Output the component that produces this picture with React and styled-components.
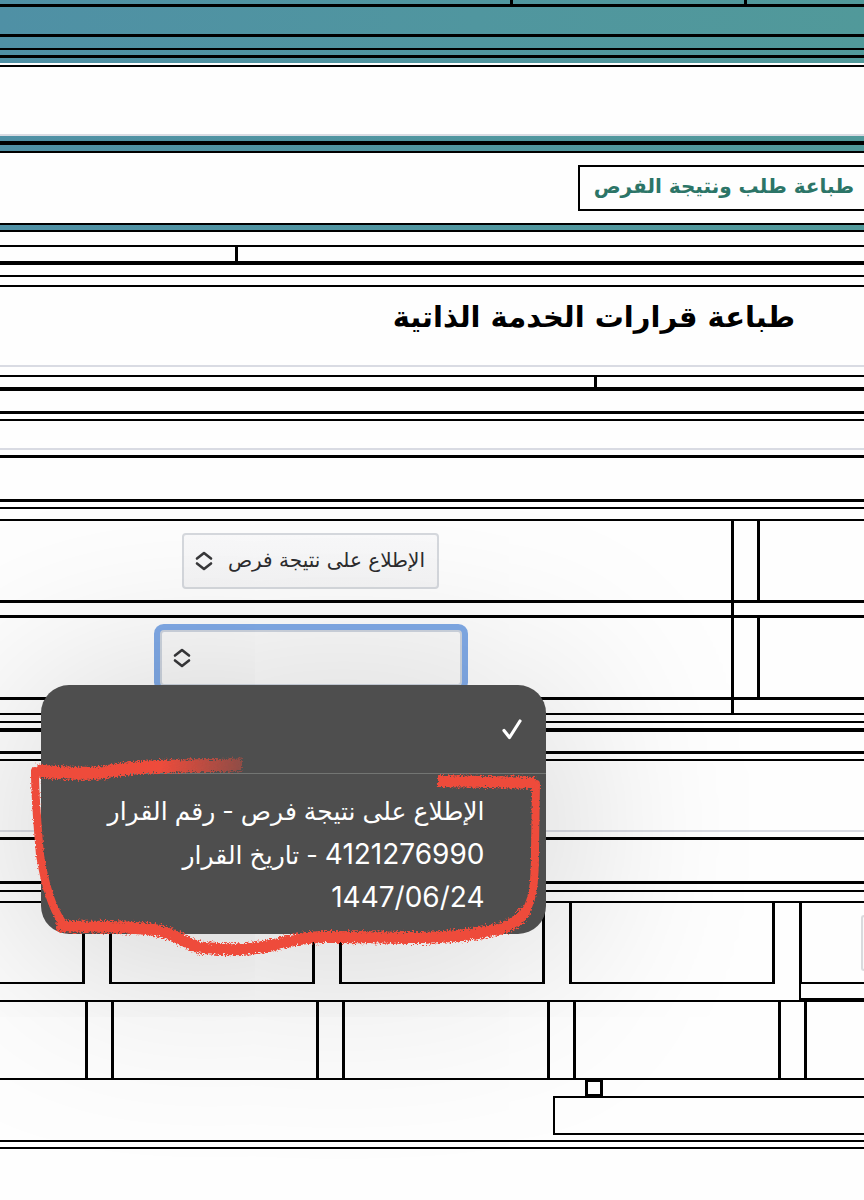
import React from "react";
import styled, { createGlobalStyle, css } from "styled-components";

const Global = createGlobalStyle`
  *, *::before, *::after { box-sizing: border-box; }
  body { margin: 0; background: #fefefe; overflow-x: hidden; }
`;

const arabic = `"DejaVu Sans", sans-serif`;

const Page = styled.main`
  min-height: 100vh;
  overflow: hidden;
  font-family: ${arabic};
`;

/* A full-width strip of the page, closed by a rule along its bottom edge. */
const Band = styled.div`
  display: flex;
  box-sizing: content-box;
  height: ${(p) => p.$h}px;
  background: ${(p) => (p.$teal ? "linear-gradient(90deg, #4f90a5, #50969f 55%, #51999a)" : "#fefefe")};
  border-bottom: ${(p) => p.$line || 0}px solid ${(p) => (p.$soft ? "#d9dbe3" : "#000")};
`;

const Split = styled.div`
  flex: ${(p) => p.$grow} 1 0;
  border-right: ${(p) => (p.$last ? 0 : 3)}px solid #000;
`;

const Nav = styled(Band).attrs({ as: "nav" })`
  justify-content: flex-end;
  align-items: center;
`;

const NavLink = styled.a`
  display: flex;
  align-items: center;
  height: 46px;
  padding: 0 10px 4px 14px;
  border: 2px solid #000;
  border-right: 0;
  color: #2c7567;
  font-size: 20px;
  font-weight: 700;
  text-decoration: none;
  white-space: nowrap;
`;

const TitleBand = styled(Band)`
  justify-content: flex-end;
  padding: 8px 69px 0 0;
`;

const Title = styled.h1`
  margin: 0;
  font-size: 29px;
  line-height: 44px;
  font-weight: 700;
  white-space: nowrap;
`;

const FieldCell = styled.div`
  flex: 1;
  display: flex;
  justify-content: center;
  align-items: center;
  padding-right: 110px;
  border-right: 3px solid #000;
`;

const LabelCell = styled.div`
  width: 107px;
  margin-left: 23px;
  border-left: ${(p) => (p.$open ? 0 : 3)}px solid #000;
`;

const FieldWrap = styled.div`
  position: relative;
  width: ${(p) => p.$w}px;
  height: 56px;
`;

const Select = styled.select`
  appearance: none;
  display: block;
  width: 100%;
  height: 100%;
  margin: 0;
  padding: 0 12px 2px 38px;
  border: 2px solid #d6d9de;
  border-radius: 4px;
  background: linear-gradient(#fafafb, #f5f5f6);
  color: #2c2c2e;
  font-family: ${arabic};
  font-size: 20px;
  outline: none;
  ${(p) =>
    p.$focused &&
    css`
      border-color: #cfd6e0;
      background: #fbfbfb;
      box-shadow: 0 0 0 6px #81abe8;
    `}
`;

const Chevrons = styled.svg`
  position: absolute;
  left: 12px;
  top: 18px;
  width: 20px;
  height: 20px;
  fill: none;
  stroke: #38383a;
  stroke-width: 2.6;
  stroke-linecap: round;
  stroke-linejoin: round;
  pointer-events: none;
`;

const Menu = styled.div`
  position: absolute;
  z-index: 2;
  left: -119px;
  top: 55px;
  width: 505px;
  height: 249px;
  border-radius: 28px;
  background: #4e4e4e;
  box-shadow: 0 16px 200px 16px rgba(0, 0, 0, 0.18);
`;

const Option = styled.button`
  display: block;
  width: 100%;
  height: ${(p) => p.$h}px;
  margin: 0;
  padding: ${(p) => p.$pad};
  border: 0;
  border-bottom: ${(p) => (p.$rule ? 1 : 0)}px solid #737573;
  background: none;
  color: #fff;
  font-family: Inter, ${arabic};
  font-size: 25px;
  text-align: right;
  white-space: nowrap;
`;

const Line = styled.span`
  display: block;
  height: 43px;
  line-height: 43px;
`;

const Digits = styled.span`
  font-size: 28px;
`;

const Check = styled.svg`
  display: block;
  margin-left: auto;
  width: 24px;
  height: 24px;
  fill: none;
  stroke: #fff;
  stroke-width: 3.2;
  stroke-linecap: round;
  stroke-linejoin: round;
`;

const Marker = styled.svg`
  position: absolute;
  left: -21px;
  top: 65px;
  width: 540px;
  height: 220px;
  fill: none;
  stroke: #ee4b3b;
  stroke-linecap: round;
  stroke-linejoin: round;
  pointer-events: none;
`;

const Cells = styled.div`
  display: grid;
  grid-template-columns: ${(p) => p.$cols};
  column-gap: ${(p) => p.$gap}px;
  height: ${(p) => p.$h}px;
  box-sizing: content-box;
  border-bottom: ${(p) => p.$line || 0}px solid #000;
`;

const Cell = styled.div`
  display: flex;
  justify-content: flex-end;
  align-items: center;
  border: 0 solid #000;
  border-left-width: ${(p) => (p.$first ? 0 : 3)}px;
  border-right-width: ${(p) => (p.$last ? 0 : 3)}px;
  border-bottom-width: ${(p) => (p.$closed ? 2 : 0)}px;
`;

const EdgeButton = styled.button`
  width: 3px;
  height: 56px;
  padding: 0;
  border: 2px solid #d9dadd;
  border-right: 0;
  border-radius: 4px 0 0 4px;
  background: #fafafa;
`;

const SubCell = styled.div`
  width: 65px;
  margin-left: auto;
  border-left: 2px solid #000;
  border-bottom: 2px solid #000;
`;

const Footer = styled.footer`
  display: flex;
  flex-direction: column;
  height: 55px;
  padding-left: 64%;
`;

const Handle = styled.div`
  width: 18px;
  height: 16px;
  margin-left: 32px;
  border: 3px solid #000;
  border-width: 2px 3px;
`;

const FooterBox = styled.div`
  height: 39px;
  border: 2px solid #000;
  border-right: 0;
`;

const ChevronIcon = () => (
  <Chevrons viewBox="0 0 20 20" aria-hidden="true">
    <path d="M3 7.500 10 2l7 5.500M3 12.500 10 18l7-5.500" />
  </Chevrons>
);

const MarkerDrawing = () => (
  <Marker viewBox="20 750 540 220" aria-hidden="true">
    <defs>
      <filter id="crayon" x="-5%" y="-20%" width="110%" height="140%">
        <feTurbulence type="fractalNoise" baseFrequency="0.6" numOctaves="2" seed="4" />
        <feDisplacementMap in="SourceGraphic" scale="8" xChannelSelector="R" yChannelSelector="G" />
      </filter>
      <filter id="crayonThin" x="-5%" y="-20%" width="110%" height="140%">
        <feTurbulence type="fractalNoise" baseFrequency="0.6" numOctaves="2" seed="9" />
        <feDisplacementMap in="SourceGraphic" scale="3" xChannelSelector="R" yChannelSelector="G" />
      </filter>
      <linearGradient id="fade" gradientUnits="userSpaceOnUse" x1="35" y1="0" x2="243" y2="0">
        <stop offset="0.6" stopColor="#ee4b3b" />
        <stop offset="1" stopColor="#ee4b3b" stopOpacity="0.4" />
      </linearGradient>
    </defs>
    <g filter="url(#crayonThin)">
      <path d="M35 771C35 800 38 830 40 855C45 885 52 908 62 922" strokeWidth="8" />
      <path d="M521 917C534 904 535 880 535 850L536 784" strokeWidth="8" />
    </g>
    <g filter="url(#crayon)">
      <path d="M37 771C60 773 78 774 100 773C125 768 150 766 180 766L242 765" stroke="url(#fade)" strokeWidth="13" strokeLinecap="butt" />
      <path d="M62 926C90 928 130 925 160 931C182 936 188 947 204 948C240 951 260 949 290 941C320 934 350 938 420 938C455 937 480 934 503 928C515 924 520 919 524 913" strokeWidth="12" />
      <path d="M438 781L535 783" strokeWidth="12" strokeLinecap="butt" />
    </g>
  </Marker>
);

export default function App() {
  return (
    <Page>
      <Global />
      <header>
        <Band $teal $h={4} $line={3}>
          <Split $grow={514} />
          <Split $grow={232} />
          <Split $grow={118} $last />
        </Band>
        <Band $teal $h={27} $line={3} />
        <Band $teal $h={11} $line={2} />
        <Band $teal $h={5} $line={3} />
        <Band $teal $h={5} />
        <Band $h={2} $line={2} />
        <Band $h={67} $line={2} $soft />
        <Band $teal $h={5} $line={4} />
        <Band $teal $h={6} $line={2} />
        <Nav $h={70} $line={2}>
          <NavLink href="#" dir="rtl">طباعة طلب ونتيجة الفرص</NavLink>
        </Nav>
        <Band $teal $h={5} $line={2} />
      </header>

      <Band $h={13} $line={2} />
      <Band $h={14} $line={4}>
        <Split $grow={236} />
        <Split $grow={628} $last />
      </Band>
      <Band $h={10} $line={2} />
      <Band $h={8} $line={2} />
      <TitleBand $h={70} $line={2} $soft>
        <Title dir="rtl">طباعة قرارات الخدمة الذاتية</Title>
      </TitleBand>
      <Band $h={8} $line={2} />
      <Band $h={10} $line={4}>
        <Split $grow={596} />
        <Split $grow={268} $last />
      </Band>
      <Band $h={20} $line={3} />
      <Band $h={5} $line={2} />
      <Band $h={27} $line={2} $soft />
      <Band $h={5} $line={3} />
      <Band $h={41} $line={3} />
      <Band $h={5} $line={2} />
      <Band $h={10} $line={2} />

      <Band $h={79} $line={3}>
        <FieldCell>
          <FieldWrap $w={257}>
            <Select dir="rtl" aria-label="نوع القرار" defaultValue="result">
              <option value="result">الإطلاع على نتيجة فرص</option>
            </Select>
            <ChevronIcon />
          </FieldWrap>
        </FieldCell>
        <LabelCell />
      </Band>
      <Band $h={12} $line={3}>
        <FieldCell />
        <LabelCell $open />
      </Band>
      <Band $h={79} $line={3}>
        <FieldCell>
          <FieldWrap $w={302}>
            <Select $focused dir="rtl" aria-label="القرار" defaultValue="">
              <option value=""></option>
            </Select>
            <ChevronIcon />
            <Menu role="listbox" dir="rtl">
              <Option role="option" aria-selected="true" aria-label="القرار" $h={89} $pad="0 22px" $rule>
                <Check viewBox="0 0 24 24">
                  <path d="M4 13.500 9.500 20.500 20 4" />
                </Check>
              </Option>
              <Option role="option" aria-selected="false" $h={160} $pad="16px 61px 15px 0">
                <Line>الإطلاع على نتيجة فرص - رقم القرار</Line>
                <Line>
                  <Digits>4121276990</Digits> - تاريخ القرار
                </Line>
                <Line>
                  <Digits>1447/06/24</Digits>
                </Line>
              </Option>
              <MarkerDrawing />
            </Menu>
          </FieldWrap>
        </FieldCell>
        <LabelCell />
      </Band>
      <Band $h={13} $line={2}>
        <FieldCell />
        <LabelCell $open />
      </Band>

      <Band $h={6} $line={2} />
      <Band $h={5} $line={4} />
      <Band $h={19} $line={3} />
      <Band $h={5} $line={2} />
      <Band $h={69} $line={2} $soft />
      <Band $h={5} $line={3} />
      <Band $h={41} $line={3} />
      <Band $h={6} $line={2} />
      <Band $h={9} $line={2} />
      <Cells $cols="85fr 206fr 206fr 206fr 65fr" $gap={24} $h={81}>
        <Cell $first $closed />
        <Cell $closed />
        <Cell $closed />
        <Cell $closed />
        <Cell $last $closed>
          <EdgeButton aria-label="بحث" />
        </Cell>
      </Cells>
      <Band $h={16} $line={2}>
        <SubCell />
      </Band>
      <Cells $cols="88fr 208fr 208fr 208fr 60fr" $gap={23} $h={76} $line={2}>
        <Cell $first />
        <Cell />
        <Cell />
        <Cell />
        <Cell $last />
      </Cells>
      <Footer>
        <Handle />
        <FooterBox />
      </Footer>
      <Band $h={5} $line={2} />
      <Band $h={5} $line={2} />
    </Page>
  );
}
